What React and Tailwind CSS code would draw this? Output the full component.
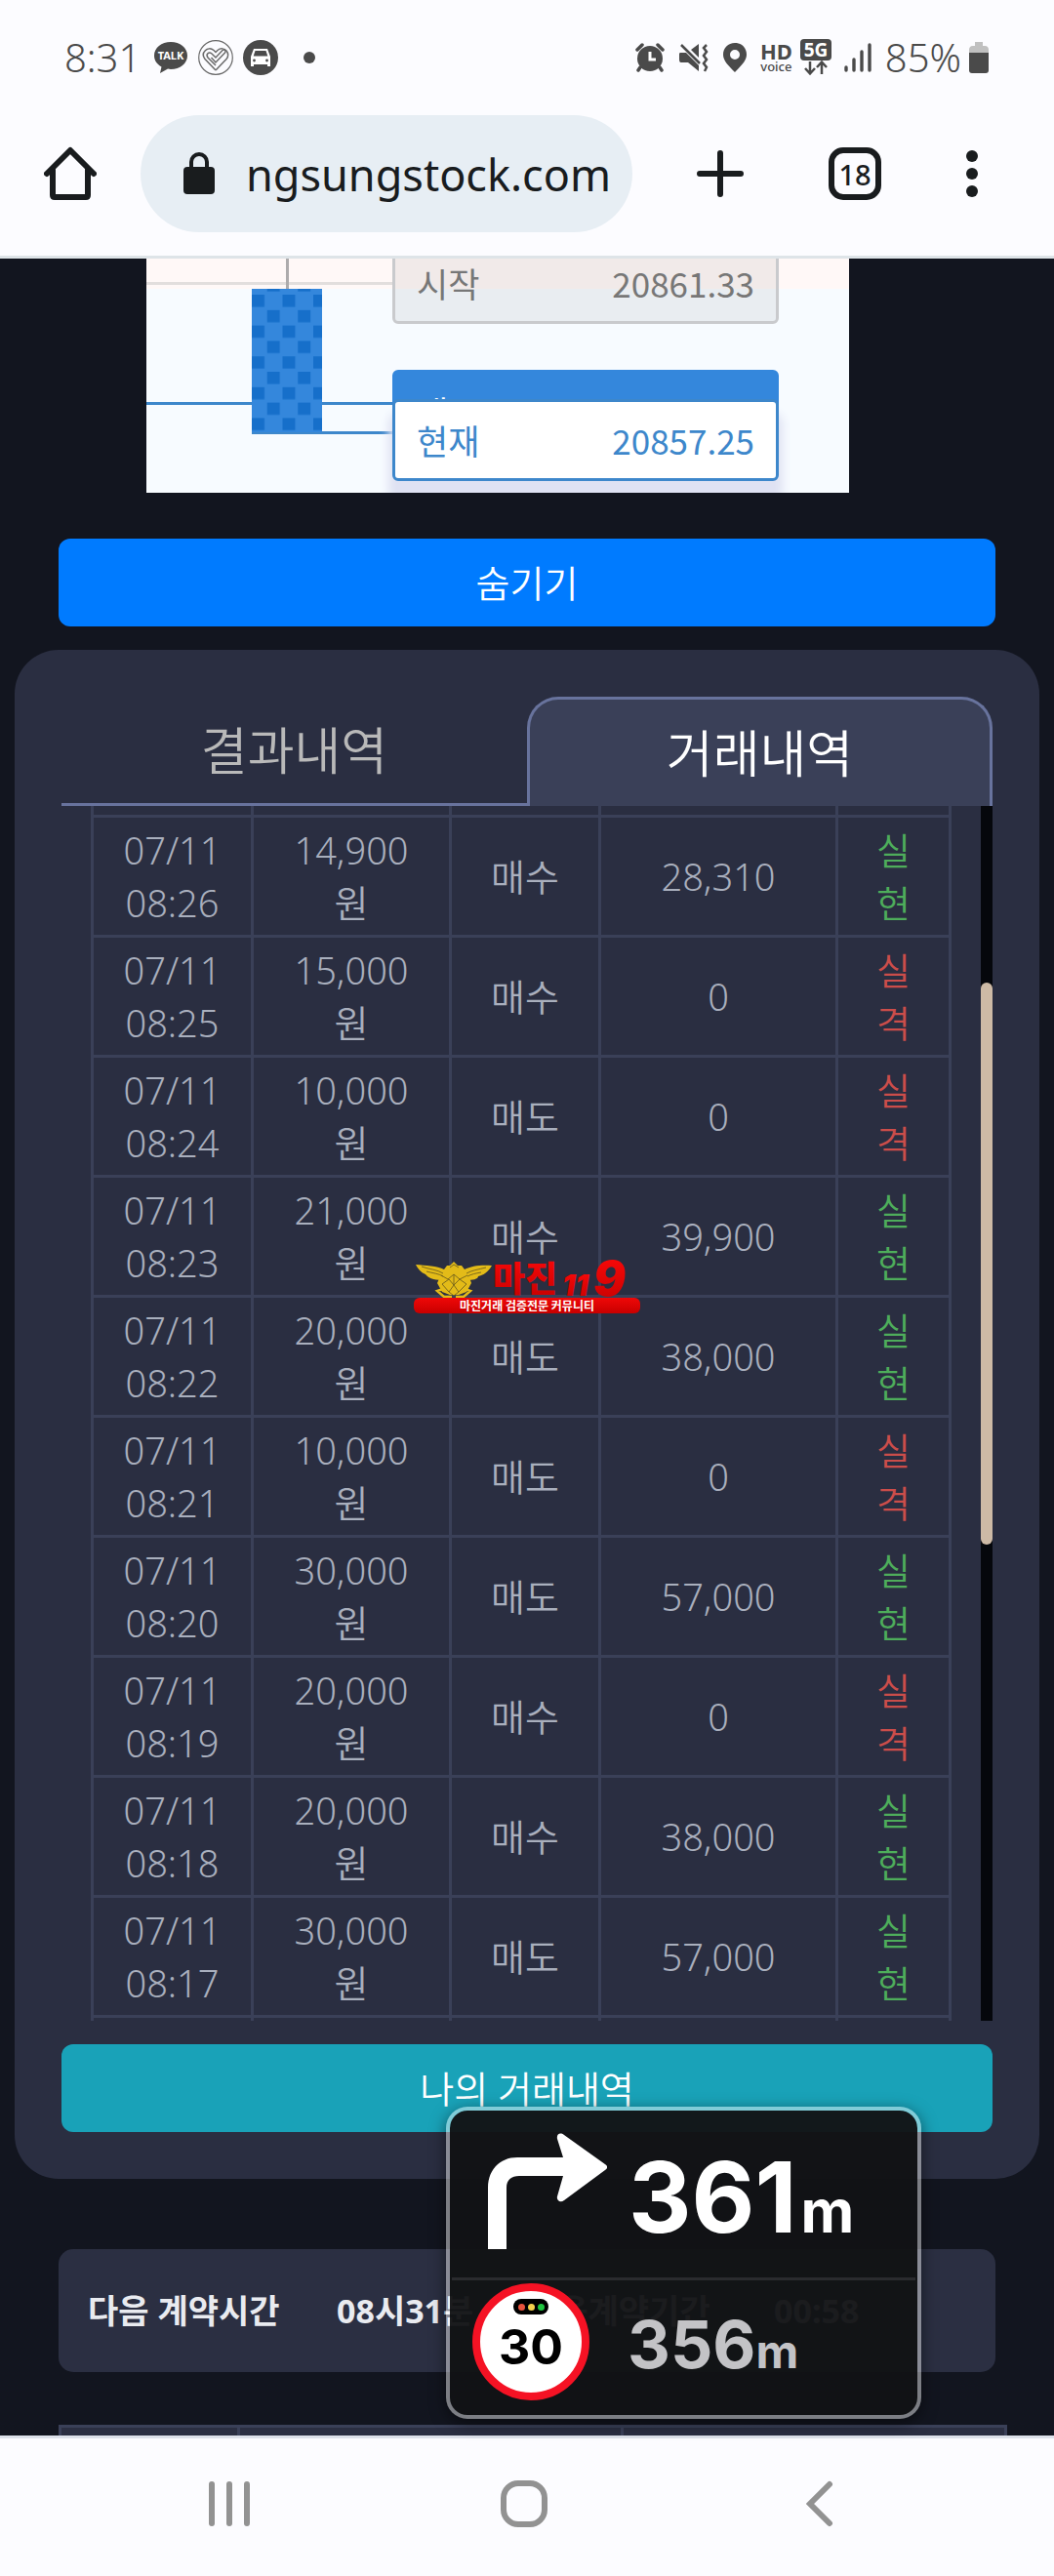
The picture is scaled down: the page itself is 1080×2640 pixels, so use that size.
const trades = [
  { time: '08:26', amount: '14,900', side: '매수', payout: '28,310', win: true },
  { time: '08:25', amount: '15,000', side: '매수', payout: '0', win: false },
  { time: '08:24', amount: '10,000', side: '매도', payout: '0', win: false },
  { time: '08:23', amount: '21,000', side: '매수', payout: '39,900', win: true },
  { time: '08:22', amount: '20,000', side: '매도', payout: '38,000', win: true },
  { time: '08:21', amount: '10,000', side: '매도', payout: '0', win: false },
  { time: '08:20', amount: '30,000', side: '매도', payout: '57,000', win: true },
  { time: '08:19', amount: '20,000', side: '매수', payout: '0', win: false },
  { time: '08:18', amount: '20,000', side: '매수', payout: '38,000', win: true },
  { time: '08:17', amount: '30,000', side: '매도', payout: '57,000', win: true },
];

const StatusBar = () => (
  <div className="flex h-[118px] items-center justify-between pl-[66px] pr-[67px] text-[40px] font-[350] leading-none text-[#4a4a4a]">
    <div className="flex items-center">
      <span>8:31</span>
      <svg className="ml-[14px]" width="34" height="36" viewBox="0 0 34 36">
        <path d="M17 2C7.500 2 0 8 0 16c0 5 3 9 7.500 11.500L6 34l8-4.500 3 .5c9.500 0 17-6 17-14S26.500 2 17 2z" fill="#4a4a4a" />
        <text x="17" y="20" fontSize="11" fontWeight="700" fill="#fff" textAnchor="middle">TALK</text>
      </svg>
      <svg className="ml-[11px]" width="36" height="36" viewBox="0 0 36 36" fill="none" stroke="#6a6a6a">
        <circle cx="18" cy="18" r="17.300" strokeWidth="1.200" />
        <path d="M18 31L7 19.500C2 13 10 5.500 16 10.500l2 2 2-2c3-2.500 7-2 9 .5M18 31l11-11.500c2-2.500 2-6 0-8.500" strokeWidth="1.500" />
        <path d="M18 26l-8-8c-2.500-3.500 1-6.500 4-4l4 4 7-7.500c2-1.500 4 .5 2.500 2.500L18 23l-4.500-5" strokeWidth="1.500" />
      </svg>
      <svg className="ml-[10px]" width="36" height="36" viewBox="0 0 36 36">
        <circle cx="18" cy="18" r="18" fill="#4a4a4a" />
        <path d="M11 9h14l3 8v10h-3v-2H11v2H8V17z" fill="#fff" />
        <path d="M12.500 11h11l1.800 5.500H10.700z" fill="#4a4a4a" />
        <circle cx="11.500" cy="21" r="1.400" fill="#4a4a4a" />
        <circle cx="24.500" cy="21" r="1.400" fill="#4a4a4a" />
      </svg>
      <span className="ml-[26px] size-3 rounded-full bg-[#4a4a4a]" />
    </div>
    <div className="flex items-center">
      <svg width="30" height="30" viewBox="0 0 30 30">
        <circle cx="15" cy="16" r="13" fill="#4a4a4a" />
        <path d="M2 7l5-5M28 7l-5-5M5 25l-2 3M25 25l2 3" stroke="#4a4a4a" strokeWidth="3.500" strokeLinecap="round" />
        <path d="M15 9v8h6" stroke="#fff" strokeWidth="3" fill="none" />
      </svg>
      <svg className="ml-[14px]" width="32" height="30" viewBox="0 0 32 30">
        <path d="M2 10h6l13 13v6L10 20H3c-2 0-2-2-2-4v-4c0-1 0-2 1-2zM13 7l8-6v14z" fill="#4a4a4a" />
        <path d="M3 2l19 19" stroke="#4a4a4a" strokeWidth="2.500" />
        <path d="M29 2l-3 3 3 4-3 4 3 4-3 4 3 4-2 4" stroke="#4a4a4a" strokeWidth="2.500" fill="none" />
      </svg>
      <svg className="ml-[14px]" width="24" height="30" viewBox="0 0 24 30">
        <path fillRule="evenodd" d="M12 0C5 0 0 5 0 12c0 6 5 11 12 18 7-7 12-12 12-18C24 5 19 0 12 0zm0 7a5 5 0 1 1 0 10 5 5 0 0 1 0-10z" fill="#4a4a4a" />
      </svg>
      <span className="ml-[14px] flex flex-col items-center">
        <span className="text-[22px] font-bold leading-[18px]">HD</span>
        <span className="text-[13px] font-medium leading-[14px]">voice</span>
      </span>
      <svg className="ml-[8px]" width="32" height="38" viewBox="0 0 32 38">
        <rect width="32" height="22" rx="4" fill="#4a4a4a" />
        <text x="16" y="18" fontSize="19" fontWeight="700" fill="#fff" textAnchor="middle">5G</text>
        <path d="M10 23v12M5 30l5 5.500 5-5.500M22 36V24M17 29l5-5.500 5 5.500" stroke="#4a4a4a" strokeWidth="2.500" fill="none" />
      </svg>
      <svg className="ml-[13px]" width="28" height="30" viewBox="0 0 28 30" stroke="#4a4a4a" strokeWidth="3.400" strokeLinecap="round">
        <path d="M2 25v3M10 17v11M18 9v19M26 2v26" />
      </svg>
      <span className="ml-[14px]">85%</span>
      <svg className="ml-2" width="20" height="32" viewBox="0 0 20 32">
        <path d="M6 0h8v4h2c3 0 4 2 4 4v4H0V8c0-2 1-4 4-4h2z" fill="#c0c0c0" />
        <path d="M0 11h20v18c0 2-1 3-3 3H3c-2 0-3-1-3-3z" fill="#4a4a4a" />
      </svg>
    </div>
  </div>
);

const AddressBar = () => (
  <div className="flex items-center pb-6 pl-[45px] pr-[78px] text-[#191c1e]">
    <button aria-label="홈">
      <svg width="54" height="56" viewBox="0 0 54 56" fill="none" stroke="#191c1e" strokeWidth="6" strokeLinecap="round" strokeLinejoin="round">
        <path d="M3 28L27 4l24 24M9 24v26q0 2 2 2h32q2 0 2-2V24" />
      </svg>
    </button>
    <a href="#site" className="ml-[45px] flex h-[120px] flex-1 items-center rounded-full bg-[#e7eef4] pl-[44px]">
      <svg width="32" height="44" viewBox="0 0 32 44">
        <rect y="15" width="32" height="28" rx="4" fill="#191c1e" />
        <path d="M8 18v-8a8 8 0 0 1 16 0v8" fill="none" stroke="#191c1e" strokeWidth="4" />
      </svg>
      <span className="ml-8 text-[45px] leading-none">ngsungstock.com</span>
    </a>
    <button aria-label="새 탭" className="ml-[66px]">
      <svg width="48" height="48" viewBox="0 0 48 48" stroke="#191c1e" strokeWidth="6" strokeLinecap="round">
        <path d="M24 3v42M3 24h42" />
      </svg>
    </button>
    <button aria-label="탭 18개" className="ml-[87px] flex size-[54px] items-center justify-center rounded-[15px] border-6 border-[#191c1e] text-[29px] font-medium leading-none">
      18
    </button>
    <button aria-label="메뉴" className="ml-[87px] flex w-3 flex-col gap-[6px]">
      <span className="size-3 rounded-full bg-[#191c1e]" />
      <span className="size-3 rounded-full bg-[#191c1e]" />
      <span className="size-3 rounded-full bg-[#191c1e]" />
    </button>
  </div>
);

const PriceChart = () => (
  <div className="relative ml-[150px] h-60 w-[720px] overflow-hidden bg-[#f7fbff] font-['Noto_Sans_CJK_KR',sans-serif] text-[35px] leading-none">
    <svg className="block" width="720" height="240" viewBox="0 0 720 240">
      <defs>
        <pattern id="checks" x="108" y="37" width="31.500" height="31.600" patternUnits="userSpaceOnUse">
          <rect width="31.500" height="31.600" fill="#3487dc" />
          <rect width="13" height="12.500" fill="#166fca" />
          <rect x="15.700" y="15.800" width="13" height="12.500" fill="#166fca" />
        </pattern>
      </defs>
      <rect width="720" height="31" fill="#fff8f7" />
      <path d="M0 25.500h252" stroke="#e2dedd" strokeWidth="3" />
      <path d="M144.500 0v31" stroke="#adabac" strokeWidth="3" />
      <path d="M0 148.500h252M108 178.500h144" stroke="#3d87cb" strokeWidth="3" />
      <rect x="108" y="31" width="72" height="147" fill="url(#checks)" />
    </svg>
    <div className="absolute -top-[17px] left-[252px] flex h-[84px] w-[396px] items-center justify-between rounded-md border-3 border-[#c9cacd] bg-[#777]/10 px-[22px] pb-[2px] text-[#777]">
      <span>시작</span>
      <span>20861.33</span>
    </div>
    <div className="absolute left-[252px] top-[114px] flex h-[84px] w-[396px] items-center rounded-md border-3 border-[#3487dc] bg-[#3487dc] px-[22px] text-white">
      <span>매도</span>
    </div>
    <div className="absolute left-[252px] top-36 flex h-[84px] w-[396px] items-center justify-between rounded-md border-3 border-[#3d87cb] bg-white px-[22px] pb-[2px] text-[#3d87cb] shadow-[0_18px_10px_4px_#dfe2f3]">
      <span>현재</span>
      <span>20857.25</span>
    </div>
  </div>
);

const Watermark = () => (
  <div className="pointer-events-none absolute left-1/2 top-[465px] w-[232px] -translate-x-1/2">
    <svg className="block" width="232" height="39" viewBox="0 0 232 39" fontFamily="'Noto Sans CJK KR', sans-serif">
      <defs>
        <linearGradient id="red" x1="0" y1="0" x2="0" y2="1">
          <stop offset="0" stopColor="#ff0a0a" />
          <stop offset="1" stopColor="#c40000" />
        </linearGradient>
      </defs>
      <g fill="#e3bb18">
        <path d="M2 5c10 1 22 1 29 5l3-4h15l3 4c7-4 18-5 28-4-4 7-9 10-14 11 0 3-6 4-12 4H29C20 21 14 18 12 15 7 13 4 9 2 5z" />
        <path d="M41 2l5 5-1 5h-8l-1-5zM28 15h28l3 9-5 9-8 3H37l-8-3-5-9z" />
        <path d="M30 30l-6 2 7 6h8M52 30l6 2-7 6h-8" fill="none" stroke="#e3bb18" strokeWidth="2.500" />
      </g>
      <g fill="none" stroke="#71611c" strokeWidth="0.900">
        <path d="M8 7c8 3 16 3 22 7M13 12c7 2 12 2 17 5M74 8c-8 2-15 3-20 6M69 13c-6 1-10 2-14 4" />
        <path d="M28 16l7 4 6-5 6 5 8-4M29 25l7-5 5 6-5 7zM54 25l-7-5-6 6 5 7zM41 15v11M36 33l5 4 5-4M37 8l4-3 5 3" />
      </g>
      <text x="81" y="33" fontSize="36" fontWeight="900" fill="url(#red)">마진</text>
      <g fontFamily="Inter, sans-serif" fontWeight="900" fontStyle="italic" fill="url(#red)">
        <text x="152" y="37" fontSize="30">11</text>
        <text x="184" y="37" fontSize="49">9</text>
      </g>
    </svg>
    <p className="rounded-[6px] bg-linear-to-b from-[#f00808] to-[#c80000] text-center font-['Noto_Sans_CJK_KR',sans-serif] text-[12px] font-bold leading-4 text-white">
      마진거래 검증전문 커뮤니티
    </p>
  </div>
);

const cell = 'border-r-3 border-b-3 border-[#3a4058] p-0';

const TradeTable = () => (
  <div className="relative flex h-[1245px] overflow-hidden pl-[30px]">
    <div className="flex-1 pr-[30px]">
      <table className="w-full table-fixed border-separate border-spacing-0 border-l-3 border-[#3a4058] text-center text-[38px] font-[350] leading-[54px] text-[#a9afbd]">
        <colgroup>
          <col className="w-[164px]" />
          <col className="w-[203px]" />
          <col className="w-[153px]" />
          <col className="w-[243px]" />
          <col className="w-[116px]" />
        </colgroup>
        <tbody>
          <tr className="h-3">
            {[0, 1, 2, 3, 4].map((i) => (
              <td key={i} className={cell} />
            ))}
          </tr>
          {trades.map((trade) => (
            <tr key={trade.time} className="h-[123px]">
              <td className={cell}>
                07/11
                <br />
                {trade.time}
              </td>
              <td className={cell}>
                {trade.amount}
                <br />
                원
              </td>
              <td className={cell}>{trade.side}</td>
              <td className={cell}>{trade.payout}</td>
              <td className={trade.win ? `${cell} text-[#4ead5b]` : `${cell} text-[#cb4d4a]`}>
                실
                <br />
                {trade.win ? '현' : '격'}
              </td>
            </tr>
          ))}
          <tr className="h-3">
            {[0, 1, 2, 3, 4].map((i) => (
              <td key={i} className={cell} />
            ))}
          </tr>
        </tbody>
      </table>
    </div>
    <div className="w-3 bg-[#05070c] pt-[181px]">
      <div className="h-[576px] rounded-full bg-[#cdbaa6]" />
    </div>
    <Watermark />
  </div>
);

const HistoryPanel = () => (
  <section className="mx-[15px] mt-6 rounded-[45px] bg-[#2a2e41] p-12">
    <div role="tablist" className="grid h-28 grid-cols-2 text-[52px] font-[350] leading-none">
      <button role="tab" aria-selected="false" className="border-b-3 border-[#68739d] text-[#b9b9b9]">
        결과내역
      </button>
      <button role="tab" aria-selected="true" className="rounded-t-[32px] border-3 border-b-0 border-[#68739d] bg-[#3a4058] text-white">
        거래내역
      </button>
    </div>
    <TradeTable />
    <button className="mt-6 h-[90px] w-full rounded-xl bg-[#19a2b8] text-[38px] font-[350] leading-none text-white">
      나의 거래내역
    </button>
  </section>
);

const NavigationOverlay = () => (
  <aside className="absolute bottom-[17px] right-[136px] flex h-80 w-[487px] flex-col rounded-[22px] border-4 border-white/45 bg-[#121315]/96 bg-clip-padding font-['Inter',sans-serif] font-bold leading-none shadow-[0_4px_16px_rgba(0,0,0,0.5)]">
    <div className="flex h-[171px] items-center pl-[39px] text-white">
      <svg className="-mt-[6px]" width="122" height="119" viewBox="0 0 122 119" fill="#fff">
        <path d="M0 119V56C0 38 12 25 30 25h47L71 6c-1-5 3-7 7-4l42 30c3 2 3 4 0 6L78 69c-4 3-8 0-7-4l6-21H32c-8 0-13 4-13 12v63z" />
      </svg>
      <p className="ml-[22px] flex items-baseline pt-[6px]">
        <span className="text-[100px]">361</span>
        <span className="ml-1 text-[60px]">m</span>
      </p>
    </div>
    <hr className="mx-[2px] border-t-3 border-[#2a2b2e]" />
    <div className="flex flex-1 items-center pb-3 pl-[23px]">
      <div className="flex size-[120px] flex-col items-center rounded-full border-8 border-[#f51224] bg-white pt-2 text-black">
        <span className="flex h-4 w-9 items-center justify-center gap-[3px] rounded-full bg-black">
          <span className="size-[7px] rounded-full bg-[#e8523c]" />
          <span className="size-[7px] rounded-full bg-[#f6d14c]" />
          <span className="size-[7px] rounded-full bg-[#1fc43f]" />
        </span>
        <span className="mt-2 text-[50px]">30</span>
      </div>
      <p className="ml-[39px] flex items-baseline pt-1 text-[#c3c3c6]">
        <span className="text-[68px]">356</span>
        <span className="text-[48px]">m</span>
      </p>
    </div>
  </aside>
);

const ContractInfo = () => (
  <>
    <div className="mx-[60px] mt-[72px] flex h-[126px] items-center rounded-[15px] bg-[#2b2f42] px-[30px] text-[34px] font-bold leading-none text-[#e9ebf0]">
      <span className="w-[255px]">다음 계약시간</span>
      <span className="w-[195px]">08시31분</span>
      <span className="w-[253px]">다음계약기간</span>
      <span>00:58</span>
    </div>
    <table className="ml-[60px] mr-12 mt-[54px] h-[11px] w-[90%] table-fixed border-separate border-spacing-0 border-l-3 border-t-3 border-[#3a4058] bg-[#2b2f42]">
      <colgroup>
        <col className="w-[183px]" />
        <col className="w-[393px]" />
        <col className="w-[393px]" />
      </colgroup>
      <tbody>
        <tr>
          <td className="border-r-3 border-[#3a4058] p-0" />
          <td className="border-r-3 border-[#3a4058] p-0" />
          <td className="border-r-3 border-[#3a4058] p-0" />
        </tr>
      </tbody>
    </table>
  </>
);

const SystemNav = () => (
  <nav className="flex h-36 items-center justify-between border-t-3 border-[#dde1ea] bg-[#fcfcff] pb-2 pl-[214px] pr-[226px]">
    <button aria-label="최근 앱" className="flex gap-3">
      <span className="h-[46px] w-[6px] rounded-full bg-[#929292]" />
      <span className="h-[46px] w-[6px] rounded-full bg-[#929292]" />
      <span className="h-[46px] w-[6px] rounded-full bg-[#929292]" />
    </button>
    <button aria-label="홈 화면" className="mr-[8px] size-12 rounded-[18px] border-6 border-[#929292]" />
    <button aria-label="뒤로">
      <svg width="28" height="48" viewBox="0 0 28 48" fill="none" stroke="#929292" strokeWidth="6" strokeLinecap="round">
        <path d="M24 4L4 24l20 20" />
      </svg>
    </button>
  </nav>
);

const App = () => {
  return (
    <div className="min-h-screen bg-[#12151f] font-['Noto_Sans','Noto_Sans_CJK_KR',sans-serif]">
      <header className="border-b-3 border-[#dee4e8] bg-[#fcfcff]">
        <StatusBar />
        <AddressBar />
      </header>
      <main className="relative">
        <PriceChart />
        <div className="mt-[47px] px-[60px]">
          <button className="h-[90px] w-full rounded-xl bg-[#007bff] text-[38px] font-[350] leading-none text-white">
            숨기기
          </button>
        </div>
        <HistoryPanel />
        <ContractInfo />
        <NavigationOverlay />
      </main>
      <SystemNav />
    </div>
  );
};

export default App;
